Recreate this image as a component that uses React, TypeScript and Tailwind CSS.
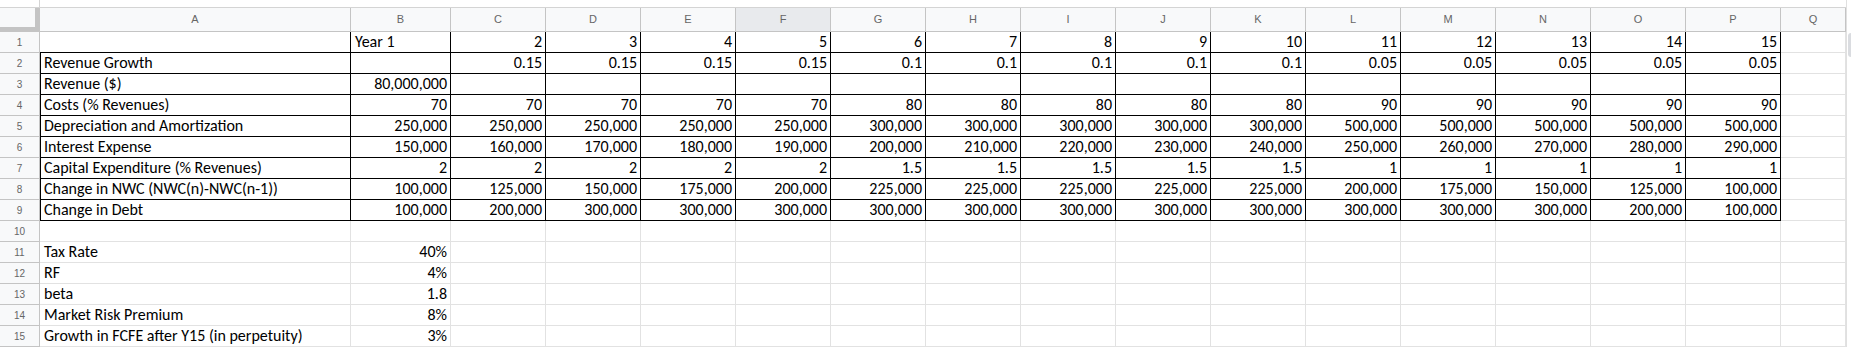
const COLS = ["A", "B", "C", "D", "E", "F", "G", "H", "I", "J", "K", "L", "M", "N", "O", "P", "Q"];

const fill = (a: string, b: string, c: string) => [a, a, a, a, b, b, b, b, b, c, c, c, c, c];

// rows 1..15, cells A..P (Q always empty)
const ROWS: string[][] = [
  ["", "Year 1", "2", "3", "4", "5", "6", "7", "8", "9", "10", "11", "12", "13", "14", "15"],
  ["Revenue Growth", "", ...fill("0.15", "0.1", "0.05")],
  ["Revenue ($)", "80,000,000", ...Array(14).fill("")],
  ["Costs (% Revenues)", "70", ...fill("70", "80", "90")],
  ["Depreciation and Amortization", "250,000", ...fill("250,000", "300,000", "500,000")],
  [
    "Interest Expense",
    ...Array.from({ length: 15 }, (_, i) => `${150 + i * 10},000`),
  ],
  ["Capital Expenditure (% Revenues)", "2", ...fill("2", "1.5", "1")],
  [
    "Change in NWC (NWC(n)-NWC(n-1))",
    "100,000", "125,000", "150,000", "175,000", "200,000",
    "225,000", "225,000", "225,000", "225,000", "225,000",
    "200,000", "175,000", "150,000", "125,000", "100,000",
  ],
  [
    "Change in Debt",
    "100,000", "200,000", "300,000", "300,000", "300,000",
    "300,000", "300,000", "300,000", "300,000", "300,000",
    "300,000", "300,000", "300,000", "200,000", "100,000",
  ],
  [],
  ["Tax Rate", "40%"],
  ["RF", "4%"],
  ["beta", "1.8"],
  ["Market Risk Premium", "8%"],
  ["Growth in FCFE after Y15 (in perpetuity)", "3%"],
];

const GRID = "grid grid-cols-[40px_311px_100px_repeat(14,95px)_65px]";

function Cell({ row, col, value }: { row: number; col: number; value: string }) {
  const boxed = row <= 9 && col <= 15;
  const left = col === 0 || (row === 1 && col === 1);
  return (
    <div
      className={`flex h-[21px] items-end overflow-visible whitespace-nowrap border-r border-b pb-[1px] text-[16px] leading-[19px] text-black ${
        boxed ? "border-black" : "border-[#e2e2e2]"
      } ${left ? "justify-start pl-[4px]" : "justify-end pr-[3px]"} ${
        boxed && col === 0 && row > 1 ? "shadow-[inset_1px_0_0_#000]" : ""
      }`}
    >
      {value}
    </div>
  );
}

export default function App() {
  return (
    <div className="flex h-[347px] w-[1851px] overflow-hidden bg-white font-[Carlito,Lato,sans-serif]">
      <div className="w-[1846px]">
        {/* strip left over from the toolbar above */}
        <div className="flex h-[8px] border-b border-[#d4d4d4]">
          <div className="w-[40px] border-r border-[#d4d4d4]" />
        </div>

        {/* column letters */}
        <div className={`${GRID} h-[24px] font-['Liberation_Sans',Arial,sans-serif] text-[11px] text-[#666]`}>
          <div className="border-r-[5px] border-b-[5px] border-[#c4c4c4] bg-[#f8f9fa]" />
          {COLS.map((c) => (
            <div
              key={c}
              className={`flex items-center justify-center border-r border-b border-[#c4c4c4] ${
                c === "F" ? "bg-[#e8eaed]" : "bg-[#f8f9fa]"
              }`}
            >
              {c}
            </div>
          ))}
        </div>

        {ROWS.map((cells, r) => (
          <div key={r} className={GRID}>
            <div className="flex h-[21px] items-center justify-center border-r border-b border-[#c4c4c4] bg-[#f8f9fa] font-['Liberation_Sans',Arial,sans-serif] text-[10px] text-[#666]">
              {r + 1}
            </div>
            {COLS.map((_, c) => (
              <Cell key={c} row={r + 1} col={c} value={cells[c] ?? ""} />
            ))}
          </div>
        ))}
      </div>

      {/* vertical scrollbar edge */}
      <div className="w-[5px] border-l border-[#e0e0e0] bg-white pt-[33px]">
        <div className="ml-[1px] h-[24px] rounded-l-[3px] bg-[#dadce0]" />
      </div>
    </div>
  );
}
